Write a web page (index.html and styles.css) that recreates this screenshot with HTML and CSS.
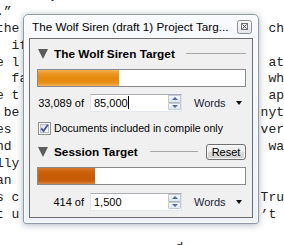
FILE: index.html
```html
<!doctype html>
<html>
<head>
<meta charset="utf-8">
<title>Project Targets</title>
<link rel="stylesheet" href="styles.css">
</head>

<body>
<div class="doc">
	<div class="col left">
		<p>       y</p>
		<p>.”</p>
		<p>the</p>
		<p>  if</p>
		<p>e l</p>
		<p>  fa</p>
		<p>e t</p>
		<p> be</p>
		<p>es</p>
		<p>nd</p>
		<p>lly</p>
		<p>an</p>
		<p>s c</p>
		<p>t u</p>
		<p></p>
		<p>                       d</p>
	</div>
	<div class="col right">
		<p></p>
		<p></p>
		<p> ch</p>
		<p></p>
		<p> at</p>
		<p> wh</p>
		<p> ap</p>
		<p>nyt</p>
		<p>ver</p>
		<p> wa</p>
		<p></p>
		<p></p>
		<p>Tru</p>
		<p>’t</p>
	</div>
</div>

<div class="win">
	<div class="titlebar">
		<span class="title">The Wolf Siren (draft 1) Project Targ...</span>
		<svg class="close" width="15" height="14" viewBox="0 0 15 14">
			<defs>
				<linearGradient id="cb" x1="0" y1="0" x2="0" y2="1">
					<stop offset="0" stop-color="#fdfdfd"/>
					<stop offset="1" stop-color="#e1e4e9"/>
				</linearGradient>
			</defs>
			<rect x=".5" y=".5" width="14" height="13" rx="2" fill="url(#cb)" stroke="#8c9198"/>
			<rect x="4.5" y="3.5" width="6" height="6" fill="none" stroke="#707070"/>
			<path d="M5.5 4.5l4 4M9.5 4.5l-4 4" stroke="#404040"/>
		</svg>
	</div>
	<div class="client">
		<div class="head">
			<span class="tri"></span>
			<b>The Wolf Siren Target</b>
			<span class="rule"></span>
		</div>
		<div class="bar"><div class="fill" style="width:39%"></div></div>
		<div class="row">
			<span class="lbl">33,089 of</span>
			<div class="field">
				<span class="val">85,000<i class="caret"></i></span>
				<span class="spin"><span class="up"></span><span class="down"></span></span>
			</div>
			<span class="unit">Words<i class="arrow"></i></span>
		</div>
		<div class="check">
			<svg class="box" width="13" height="13" viewBox="0 0 13 13">
				<defs>
					<linearGradient id="ck" x1="0" y1="0" x2="1" y2="1">
						<stop offset="0" stop-color="#dcdfe4"/>
						<stop offset="1" stop-color="#fbfbfc"/>
					</linearGradient>
				</defs>
				<rect x=".5" y=".5" width="12" height="12" fill="#f4f4f4" stroke="#8e8f8f"/>
				<rect x="2.5" y="2.5" width="8" height="8" fill="url(#ck)" stroke="#b9bec6"/>
				<path d="M3.3 6.4l2.2 2.6 4.3-6.2" fill="none" stroke="#3f5591" stroke-width="1.7"/>
			</svg>
			<span>Documents included in compile only</span>
		</div>
		<div class="head head2">
			<span class="tri"></span>
			<b>Session Target</b>
			<span class="rule"></span>
			<button class="btn">Reset</button>
		</div>
		<div class="bar session"><div class="fill" style="width:27.6%"></div></div>
		<div class="row">
			<span class="lbl">414 of</span>
			<div class="field">
				<span class="val">1,500</span>
				<span class="spin"><span class="up"></span><span class="down"></span></span>
			</div>
			<span class="unit">Words<i class="arrow"></i></span>
		</div>
	</div>
</div>
</body>
</html>
```

FILE: styles.css
```css
*{margin:0;padding:0;box-sizing:border-box}
html,body{height:245px;overflow:hidden}
body{background:#fff;font-family:"Liberation Sans",Arial,sans-serif}

/* document behind the window */
.doc{display:flex;height:258px;margin:-13px 0 0 -4px;overflow:hidden;font:13px/16.9px "Liberation Mono","Courier New",monospace;color:#222}
.doc .left{width:34ch}
.doc p{height:16.9px;white-space:pre}

/* floating tool window */
.win{position:absolute;left:23px;top:14px;width:236px;height:210px;border:1px solid #8d99a7;border-radius:5px 5px 3px 3px;background:linear-gradient(#f8fafd,#edf2f8);box-shadow:0 1px 7px rgba(30,50,80,.35),inset 0 0 0 1px rgba(255,255,255,.85)}
.win .titlebar{height:23px;display:flex;align-items:center;padding:0 6px 0 8px}
.win .title{flex:1;font-size:11.7px;color:#000;white-space:nowrap}
.win .close{display:block}
.win .client{margin:0 5px;height:180px;border:1px solid #6e6e6e;background:#f0f0f0;padding:8px 6px 0 7px;font-size:11px;color:#000}

.head{height:14px;display:flex;align-items:center}
.head b{font-size:11.8px}
.head .tri{width:0;height:0;border-left:5.5px solid transparent;border-right:5.5px solid transparent;border-top:10px solid #5c5c5c;margin:0 6px 0 1px}
.head .rule{flex:1;height:1px;background:#a8a8a8;margin:0 0 1px 11px}
.head2{height:16px;margin-top:9px}
.head2 .rule{margin-left:12px}

.btn{width:40px;height:16px;margin:0 0 0 8px;border:1px solid #707070;border-radius:3px;background:linear-gradient(#f3f3f3 0,#ebebeb 50%,#dcdcdc 50%,#d0d0d0 100%);box-shadow:inset 0 0 0 1px rgba(255,255,255,.75);font:11px "Liberation Sans",Arial,sans-serif;color:#000;line-height:13px}

.bar{height:18px;border:1px solid #8a8a8a;background:#fff;margin-top:8px}
.bar .fill{height:100%;background:linear-gradient(#f4b256 0,#ec9722 22%,#e7880a 55%,#ea8f17 80%,#f3b35a 100%)}
.bar.session{margin-top:7px}
.bar.session .fill{background:linear-gradient(#d9792a 0,#cb620c 22%,#c65a05 55%,#c85e0b 80%,#da8844 100%)}

.row{display:flex;align-items:center;height:18px;margin-top:7px}
.bar.session + .row{margin-top:8px}
.lbl{width:47px;text-align:right;margin-right:6px}
.field{width:92px;height:18px;display:flex;align-items:flex-start;border:1px solid;border-color:#abadb3 #dbdfe6 #e3e9ef #e2e3ea;background:#fff;padding-left:3px}
.field .val{flex:1;line-height:16px;white-space:nowrap}
.field .caret{display:inline-block;width:1px;height:13px;background:#000;vertical-align:-2px}
.spin{width:13px;height:15px;display:flex;flex-direction:column}
.spin span{flex:1;display:flex;align-items:center;justify-content:center;border:1px solid #c1c9d4;border-radius:1px;background:linear-gradient(#f6f8fb,#dfe5ec)}
.spin .up{border-bottom-color:#aeb8c5}
.spin .up::after{content:"";border-left:3px solid transparent;border-right:3px solid transparent;border-bottom:3px solid #4a6aa5}
.spin .down::after{content:"";border-left:3px solid transparent;border-right:3px solid transparent;border-top:3px solid #4a6aa5}
.unit{display:flex;align-items:center;margin-left:12px;color:#1b2233}
.unit .arrow{width:0;height:0;border-left:3.5px solid transparent;border-right:3.5px solid transparent;border-top:4px solid #111;margin-left:10px}

.check{display:flex;align-items:center;height:14px;margin-top:9px}
.check .box{display:block;margin:0 3px 0 1px}
.check span{font-size:10.6px;line-height:14px}
```
